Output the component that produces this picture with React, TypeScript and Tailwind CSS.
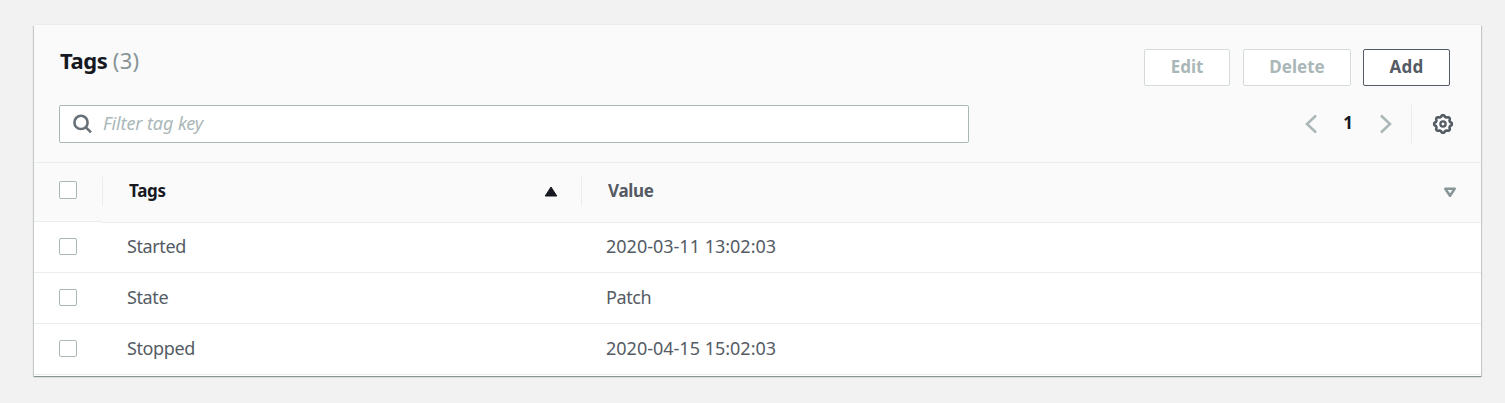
import React from "react";

type Tag = { key: string; value: string; valueTracking: string };

const tags: Tag[] = [
  { key: "Started", value: "2020-03-11 13:02:03", valueTracking: "tracking-normal" },
  { key: "State", value: "Patch", valueTracking: "tracking-[-0.4px]" },
  { key: "Stopped", value: "2020-04-15 15:02:03", valueTracking: "tracking-normal" },
];

function gearOutline(): string {
  const steps = 96;
  const points: string[] = [];
  for (let i = 0; i < steps; i++) {
    const angle = (i / steps) * Math.PI * 2;
    const wave = Math.max(-0.75, Math.min(0.75, 1.1 * Math.cos(8 * angle)));
    const radius = 8.05 + wave;
    points.push(
      `${(11 + radius * Math.sin(angle)).toFixed(2)} ${(11 - radius * Math.cos(angle)).toFixed(2)}`
    );
  }
  return `M${points.join("L")}Z`;
}

function GearIcon() {
  return (
    <svg className="size-[22px]" viewBox="0 0 22 22" fill="none" stroke="#545b64">
      <path d={gearOutline()} strokeWidth="2.6" strokeLinejoin="round" />
      <circle cx="11" cy="11" r="2.6" strokeWidth="2.3" />
    </svg>
  );
}

function SearchIcon() {
  return (
    <svg className="size-5 shrink-0" viewBox="0 0 20 20" fill="none" stroke="#687078" strokeWidth="2.6">
      <circle cx="8" cy="8.4" r="6.6" />
      <path d="M12.4 12.8L18 18.4" />
    </svg>
  );
}

function Chevron({ className, d }: { className: string; d: string }) {
  return (
    <svg className={className} viewBox="0 0 12 20" fill="none" stroke="#aab7b8" strokeWidth="2.5">
      <path d={d} />
    </svg>
  );
}

function Checkbox({ label, size }: { label: string; size: string }) {
  return (
    <span
      role="checkbox"
      aria-checked="false"
      aria-label={label}
      className={`block rounded-[2px] border border-[#aab7b8] bg-white ${size}`}
    />
  );
}

export default function App() {
  return (
    <div className="h-[403px] bg-[#f2f2f2] pl-[34px] pr-6 pt-[25px] font-['Noto_Sans',sans-serif] text-[17px] text-[#545b64]">
      <section className="h-[351px] w-[1447px] bg-white shadow-[0_1px_0_0_#879596,0_1px_1px_0_rgba(0,28,36,0.3),1px_1px_1px_0_rgba(0,28,36,0.15),-1px_1px_1px_0_rgba(0,28,36,0.15),0_-1px_0_0_#eaeded]">
        <header className="flex h-[138px] flex-col border-b border-[#eaeded] bg-[#fafafa] pl-[25px] pt-6">
          <div className="flex h-[37px] items-start justify-between pr-[31px]">
            <h1 className="-mt-[2px] ml-px text-[22px] font-bold leading-[26px] tracking-[-0.4px] text-[#16191f]">
              Tags <span className="font-normal tracking-[0.3px] text-[#879596]">(3)</span>
            </h1>
            <div className="flex text-[17px] font-bold leading-[33px]">
              <button className="mr-[13px] h-[37px] w-[86px] rounded-[2px] border border-[#d5dbdb] bg-white pb-[2px] text-[#aab7b8]">Edit</button>
              <button className="mr-3 h-[37px] w-[108px] rounded-[2px] border border-[#d5dbdb] bg-white pb-[2px] text-[#aab7b8]">Delete</button>
              <button className="h-[37px] w-[87px] rounded-[2px] border border-[#545b64] bg-white pb-[2px] tracking-[0.2px] text-[#545b64]">Add</button>
            </div>
          </div>
          <div className="mt-[19px] flex h-[38px] items-center justify-between pr-[27px]">
            <div className="flex h-[38px] w-[910px] items-center rounded-[2px] border border-[#aab7b8] bg-white pl-[13px]">
              <SearchIcon />
              <span className="-mt-px ml-[10px] text-[18px] italic tracking-[-0.1px] text-[#aab7b8]">Filter tag key</span>
            </div>
            <div className="flex h-[38px] items-center">
              <Chevron className="h-5 w-3" d="M11 1.5L2 10L11 18.5" />
              <span className="-mt-[2px] ml-[26px] w-[10px] text-center text-[17px] font-bold text-[#16191f]">1</span>
              <Chevron className="ml-[27px] h-5 w-3" d="M1 1.5L10 10L1 18.5" />
              <span className="ml-[19px] h-[38px] w-px bg-[#eaeded]" />
              <span className="ml-5">
                <GearIcon />
              </span>
            </div>
          </div>
        </header>
        <div className="flex h-[59px] bg-[#fafafa] font-bold">
          <div className="h-[59px] w-[68px] border-b border-[#eaeded] pl-[25px] pt-[18px]">
            <Checkbox label="Select all" size="size-[18px]" />
          </div>
          <div className="flex h-[60px] w-[479px] border-b border-[#eaeded] bg-[#fafafa] pt-[14px]">
            <span className="h-[29px] w-px bg-[#eaeded]" />
            <span className="ml-[26px] h-7 leading-7 tracking-[-0.3px] text-[#16191f]">Tags</span>
            <svg className="ml-auto mr-[23px] mt-[9px] h-[11px] w-[14px]" viewBox="0 0 14 11">
              <path d="M7 1L12.8 10H1.2Z" fill="#16191f" stroke="#16191f" strokeLinejoin="round" />
            </svg>
          </div>
          <div className="flex h-[60px] flex-1 border-b border-[#eaeded] bg-[#fafafa] pt-[14px]">
            <span className="h-[29px] w-px bg-[#eaeded]" />
            <span className="ml-[26px] h-7 leading-7 tracking-[-0.3px]">Value</span>
            <svg className="ml-auto mr-[24px] mt-[10px] h-[11px] w-[14px]" viewBox="0 0 14 11">
              <path d="M2.3 1.8H11.7L7 8.8Z" fill="none" stroke="#879596" strokeWidth="2.5" strokeLinejoin="round" />
            </svg>
          </div>
        </div>
        {tags.map((tag) => (
          <div key={tag.key} className="flex h-[51px] items-center border-b border-[#eaeded] pl-[25px] text-[18px]">
            <span className="-mt-px">
              <Checkbox label={tag.key} size="h-[17px] w-[18px]" />
            </span>
            <span className="-mt-px ml-[50px] w-[479px] tracking-[-0.4px]">{tag.key}</span>
            <span className={`-mt-px ${tag.valueTracking}`}>{tag.value}</span>
          </div>
        ))}
      </section>
    </div>
  );
}
